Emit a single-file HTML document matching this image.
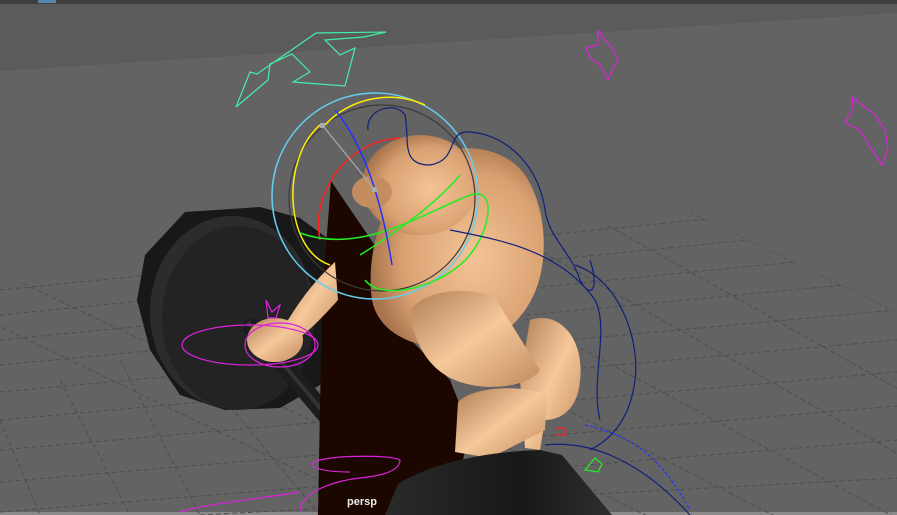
<!DOCTYPE html>
<html><head><meta charset="utf-8"><style>
html,body{margin:0;padding:0;background:#636363;overflow:hidden;width:897px;height:515px}
svg{display:block}
</style></head><body>
<svg width="897" height="515" viewBox="0 0 897 515" xmlns="http://www.w3.org/2000/svg" style="position:absolute;left:0;top:0">
<defs>
<radialGradient id="skin" cx="0.6" cy="0.55" r="0.6">
<stop offset="0" stop-color="#f4c496"/><stop offset="0.7" stop-color="#d9a172"/><stop offset="1" stop-color="#a8744c"/>
</radialGradient>
<linearGradient id="limb" x1="0" y1="0" x2="1" y2="1">
<stop offset="0" stop-color="#b07e55"/><stop offset="0.5" stop-color="#f6c89a"/><stop offset="1" stop-color="#c08a5e"/>
</linearGradient>
<linearGradient id="plate2" x1="0" y1="0" x2="1" y2="0">
<stop offset="0" stop-color="#2a2a2a"/><stop offset="0.6" stop-color="#181818"/><stop offset="1" stop-color="#2e2e2e"/>
</linearGradient>
<clipPath id="floor"><polygon points="0,285 600,225 690,212 897,312 897,515 0,515"/></clipPath>
</defs>
<rect width="897" height="515" fill="#636363"/>
<polygon points="0,4 897,4 897,13 0,71" fill="#5b5b5b"/>
<rect width="897" height="4" fill="#3e3e3e"/>
<rect x="38" y="0" width="18" height="3" fill="#5b85a8"/>
<rect x="0" y="512" width="897" height="3" fill="#8a8a8a"/>
<g clip-path="url(#floor)" stroke="#4e4e4e" stroke-width="1" stroke-dasharray="5 3" fill="none">
<path d="M0,290 L897,200"/><path d="M0,315 L897,225"/><path d="M0,340 L897,252"/><path d="M0,365 L897,280"/>
<path d="M0,392 L897,310"/><path d="M0,420 L897,340"/><path d="M0,450 L897,372"/><path d="M0,482 L897,406"/>
<path d="M0,512 L897,440"/><path d="M200,515 L897,478"/>
<path d="M-200,230 L900,760"/><path d="M-100,225 L900,700"/><path d="M40,218 L900,640"/><path d="M180,212 L900,580"/>
<path d="M320,208 L900,520"/><path d="M460,205 L900,455"/><path d="M580,210 L900,390"/><path d="M690,212 L897,312"/>
<path d="M0,420 L40,515"/><path d="M60,380 L130,515"/><path d="M120,360 L200,515"/><path d="M200,370 L320,515"/>
</g>
<polygon points="185,212 260,207 300,218 330,240 335,330 320,385 280,408 225,410 180,395 150,350 137,300 145,255" fill="#181818"/>
<ellipse cx="232" cy="312" rx="82" ry="96" fill="#2c2c2c"/>
<ellipse cx="238" cy="318" rx="76" ry="92" fill="#232323"/>
<line x1="252" y1="327" x2="372" y2="470" stroke="#1c1c1c" stroke-width="18" stroke-linecap="round"/>
<line x1="248" y1="322" x2="368" y2="465" stroke="#333" stroke-width="4"/>
<polygon points="331,181 378,250 372,300 450,380 470,430 450,515 318,515 322,300" fill="#1c0700"/>
<path d="M285,325 C300,300 315,280 335,262 L338,300 C320,320 305,335 295,340 Z" fill="url(#limb)"/>
<ellipse cx="275" cy="340" rx="28" ry="22" fill="url(#limb)"/>
<path d="M530,320 C560,310 585,340 580,380 C578,410 560,420 545,420 L540,450 L525,448 L520,380 Z" fill="url(#limb)"/>
<path d="M372,300 C365,250 385,200 410,170 C440,140 500,140 525,175 C548,210 548,262 535,292 C522,322 498,342 468,347 C428,352 380,340 372,300 Z" fill="url(#skin)"/>
<ellipse cx="420" cy="185" rx="58" ry="50" fill="url(#skin)"/>
<ellipse cx="372" cy="192" rx="20" ry="16" fill="#c48d60"/>
<path d="M410,312 C420,290 470,285 495,298 L540,370 C530,386 490,392 460,382 C430,372 414,345 410,312 Z" fill="url(#limb)"/>
<path d="M458,402 C475,385 525,385 547,395 L545,430 L490,458 L455,452 Z" fill="url(#limb)"/>
<path d="M385,515 L398,484 C430,464 480,452 540,450 L562,455 L612,515 Z" fill="url(#plate2)"/>
<g fill="none" stroke-width="1.5">
<circle cx="375" cy="196" r="103" stroke="#66ccee"/>
<circle cx="382" cy="198" r="93" stroke="#3a3a3a" stroke-width="1.2"/>
<path d="M325,125 A88,88 0 0 1 425,105" stroke="#ffee00"/>
<path d="M320,125 C280,160 285,250 330,265" stroke="#ffee00"/>
<path d="M400,138 C350,140 310,190 320,240" stroke="#ff2222"/>
<path d="M300,233 C360,255 420,215 470,195 C500,185 490,240 460,265 C430,290 380,300 365,280" stroke="#22ee22"/>
<path d="M360,255 C400,230 440,200 460,175" stroke="#22ee22"/>
<path d="M335,110 C360,140 380,190 392,265" stroke="#2233ff"/>
<path d="M368,130 C365,110 395,100 405,115 C410,140 400,165 430,165 C460,160 445,130 470,132 C510,135 540,170 545,210 C550,240 570,250 580,280 C590,300 600,290 590,260 M450,230 C500,240 560,250 595,300 C610,330 590,380 600,420 M575,265 C620,280 640,340 635,380 C630,420 610,440 590,450 M545,445 C590,440 640,460 690,515" stroke="#10207a" stroke-width="1.2"/>
<path d="M585,425 C630,435 660,455 690,510" stroke="#2233ff" stroke-dasharray="3 2" stroke-width="1.2"/>
<ellipse cx="250" cy="345" rx="68" ry="20" stroke="#dd22dd" stroke-width="1.2"/>
<ellipse cx="280" cy="345" rx="35" ry="22" stroke="#dd22dd" stroke-width="1.2"/>
<path d="M266,300 L272,312 L280,305 L276,318 L268,318 Z" stroke="#dd22dd" stroke-width="1.2"/>
<path d="M300,512 C300,490 340,480 360,478 C390,475 400,468 400,460 C390,455 340,455 320,460 C300,465 320,472 350,472 M300,492 C250,500 200,505 180,512" stroke="#dd22dd" stroke-width="1.2"/>
<path d="M236,107 L250,72 L257,74 L316,33 L386,32 L364,37 L325,40 L340,55 L355,48 L345,86 L293,82 L310,72 L292,54 L270,64 L268,80 Z" stroke="#44eeaa" stroke-width="1.2"/>
<path d="M598,30 L605,40 L612,48 L618,60 L612,70 L608,80 L600,65 L590,58 L586,48 L598,45 Z" stroke="#dd22dd" stroke-width="1.2"/>
<path d="M852,97 L875,115 L885,130 L888,148 L882,165 L872,150 L860,130 L845,123 L853,108 Z" stroke="#dd22dd" stroke-width="1.2"/>
<path d="M585,470 L595,458 L602,464 L598,472 Z" stroke="#22ee22" stroke-width="1.2"/>
<path d="M555,428 L565,428 L565,435 L555,435" stroke="#ff2222" stroke-width="1.2"/>
</g>
<line x1="323" y1="126" x2="375" y2="190" stroke="#aaa" stroke-width="1.2"/>
<rect x="320" y="123" width="5" height="5" fill="#aaa"/>
<rect x="372" y="187" width="5" height="5" fill="#aaa"/>
<text x="347" y="505" fill="#eee" font-family="Liberation Sans, sans-serif" font-weight="bold" font-size="11">persp</text>
</svg>
</body></html>
